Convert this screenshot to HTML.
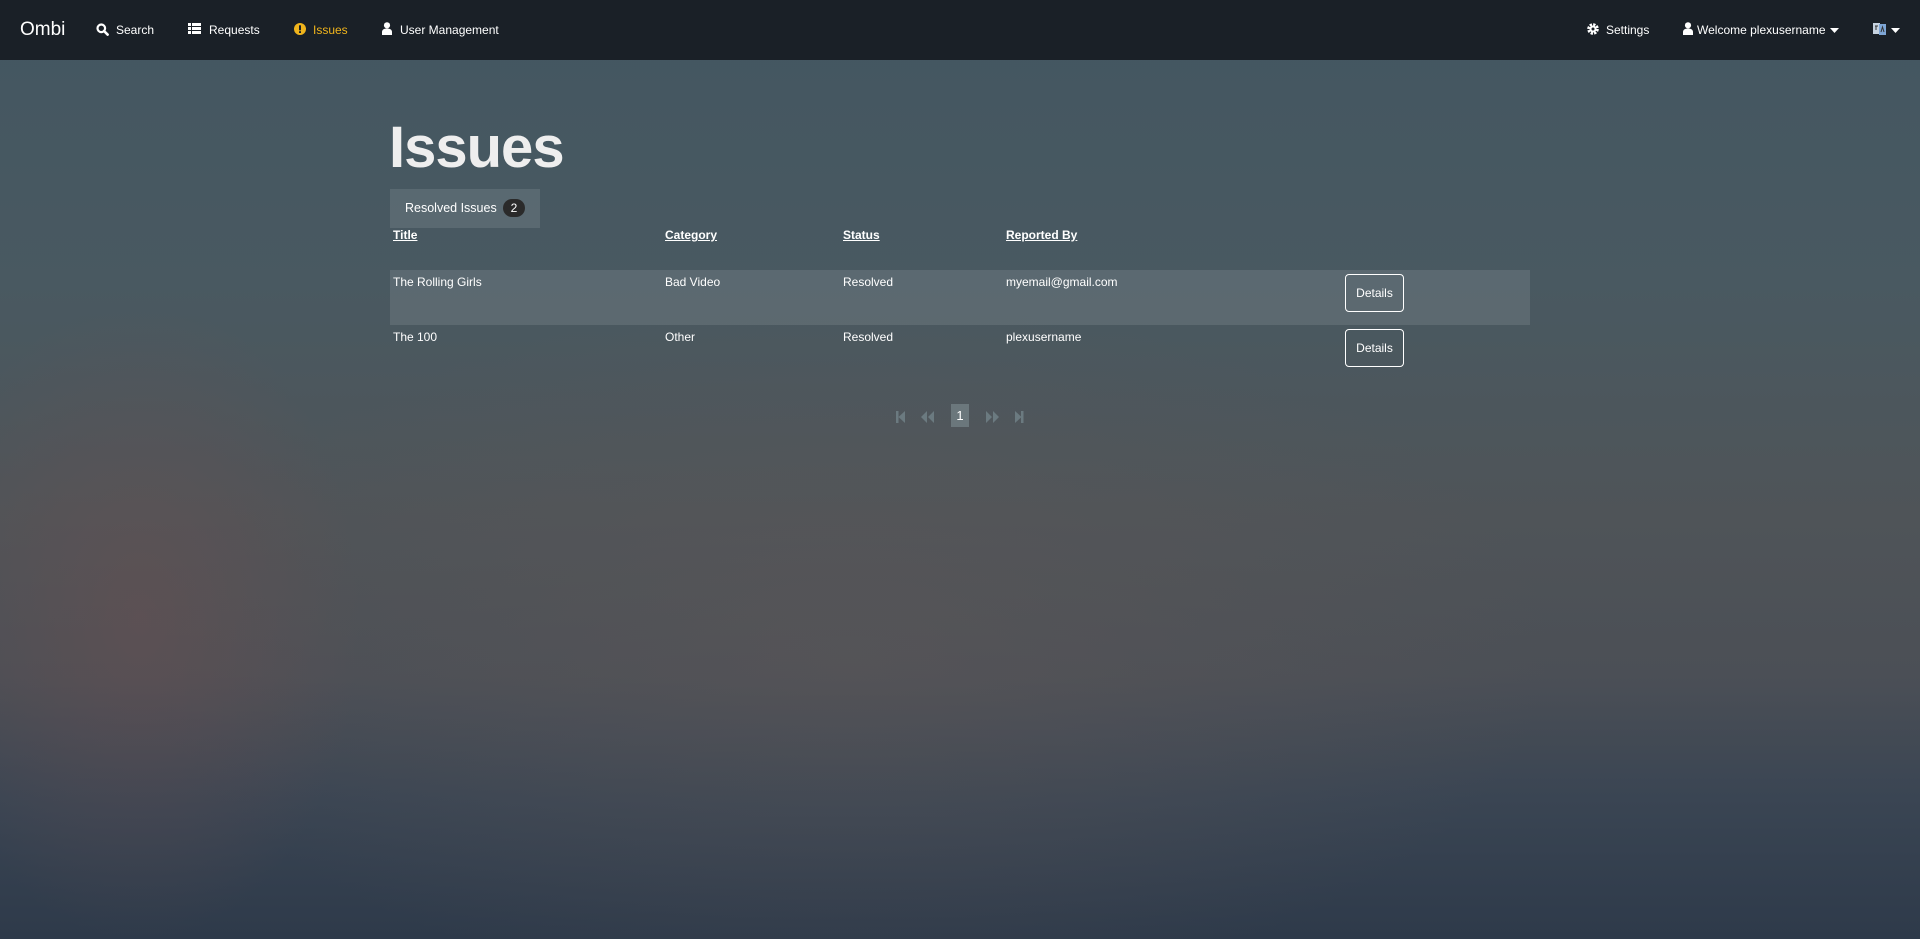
<!DOCTYPE html>
<html><head><meta charset="utf-8"><style>
*{box-sizing:border-box;margin:0;padding:0}
html,body{width:1920px;height:939px;overflow:hidden}
body{font-family:"Liberation Sans",Arial,sans-serif;color:#fff;position:relative;
background:
radial-gradient(ellipse 220px 320px at 140px 620px,rgba(110,80,80,.45),rgba(110,80,80,0) 100%),
radial-gradient(ellipse 700px 350px at 850px 650px,rgba(95,88,88,.45),rgba(95,88,88,0) 100%),
linear-gradient(to bottom,#435661 0%,#495961 30%,#4f5458 55%,#4b4f56 72%,#3a4553 85%,#2e3a4a 100%);}
.nav{position:absolute;left:0;top:0;width:1920px;height:60px;background:#1a2027;font-size:12px}
.nav span,.nav svg{position:absolute}
.nav span{top:22px;line-height:16px;white-space:nowrap}
.h{position:absolute;left:389px;top:114px;font-size:58px;font-weight:bold;color:#eee;letter-spacing:-1px}
.tab{position:absolute;left:390px;top:189px;width:150px;height:39px;background:rgba(255,255,255,.1);font-size:12.5px;white-space:nowrap}
.tab span{position:absolute;left:15px;top:12px}
.badge{position:absolute;top:11px;width:0}
.badge i{position:absolute;left:-11px;top:-1px;width:22px;height:18px;border-radius:9px;background:#2a2a2a;font-style:normal;text-align:center;line-height:18px;font-size:12px}
.t{position:absolute;font-size:12px;line-height:14px;white-space:nowrap}
.th{font-weight:bold;text-decoration:underline}
.row{position:absolute;left:390px;top:270px;width:1140px;height:55px;background:rgba(255,255,255,.1)}
.btn{position:absolute;left:1345px;width:59px;height:38px;border:1px solid #fff;border-radius:4px;font-size:12px;text-align:center;line-height:36px}
.pg{position:absolute;left:951px;top:404px;width:18px;height:23px;background:#6b777c;font-size:13px;text-align:center;line-height:23px}
</style></head><body>
<div class="nav">
<span style="left:20px;top:19px;font-size:19px;line-height:22px">Ombi</span>
<svg style="left:96px;top:23px" width="13" height="13" viewBox="0 0 13 13"><circle cx="5.3" cy="5.3" r="3.8" fill="none" stroke="#fff" stroke-width="2.2"/><path d="M8 8l3.6 3.6" stroke="#fff" stroke-width="2.6" stroke-linecap="round"/></svg>
<span style="left:116px">Search</span>
<svg style="left:188px;top:23px" width="13" height="11" viewBox="0 0 13 11"><path fill="#fff" d="M0 0h3v3H0zM4 0h9v3H4zM0 4h3v3H0zM4 4h9v3H4zM0 8h3v3H0zM4 8h9v3H4z"/></svg>
<span style="left:209px">Requests</span>
<svg style="left:294px;top:23px" width="12" height="12" viewBox="0 0 12 12"><circle cx="6" cy="6" r="6" fill="#f0b41c"/><rect x="5" y="2.3" width="2" height="5" fill="#1a2027"/><rect x="5" y="8.2" width="2" height="1.8" fill="#1a2027"/></svg>
<span style="left:313px;color:#f0b41c">Issues</span>
<svg style="left:382px;top:22px" width="10" height="13" viewBox="0 0 10 13"><circle cx="5" cy="3.3" r="3.1" fill="#fff"/><path d="M0 13v-3c0-2.3 2-3.5 5-3.5s5 1.2 5 3.5v3z" fill="#fff"/></svg>
<span style="left:400px">User Management</span>
<svg style="left:1587px;top:23px" width="12" height="12" viewBox="0 0 12 12"><circle cx="6" cy="6" r="4.2" fill="none" stroke="#fff" stroke-width="3.2" stroke-dasharray="2.2 1.1"/><circle cx="6" cy="6" r="3.5" fill="#fff"/><circle cx="6" cy="6" r="1.5" fill="#1a2027"/></svg>
<span style="left:1606px">Settings</span>
<svg style="left:1683px;top:22px" width="10" height="13" viewBox="0 0 10 13"><circle cx="5" cy="3.3" r="3.1" fill="#fff"/><path d="M0 13v-3c0-2.3 2-3.5 5-3.5s5 1.2 5 3.5v3z" fill="#fff"/></svg>
<span style="left:1697px">Welcome plexusername</span>
<svg style="left:1830px;top:28px" width="9" height="5"><path d="M0 0h9L4.5 5z" fill="#fff"/></svg>
<svg style="left:1873px;top:22px" width="13" height="14" viewBox="0 0 13 14"><rect x="0" y="1" width="7" height="11" fill="#c7d3e0"/><rect x="6" y="2" width="7" height="11" fill="#7ea6d6"/><path d="M2 4h3M3 4v4M8 10l1.5-5 1.5 5" stroke="#333" stroke-width="1" fill="none"/></svg>
<svg style="left:1891px;top:28px" width="9" height="5"><path d="M0 0h9L4.5 5z" fill="#fff"/></svg>
</div>
<div class="h">Issues</div>
<div class="tab"><span>Resolved Issues</span><div class="badge" style="left:124px"><i>2</i></div></div>
<div class="t th" style="left:393px;top:228px">Title</div>
<div class="t th" style="left:665px;top:228px">Category</div>
<div class="t th" style="left:843px;top:228px">Status</div>
<div class="t th" style="left:1006px;top:228px">Reported By</div>
<div class="row"></div>
<div class="t" style="left:393px;top:275px">The Rolling Girls</div>
<div class="t" style="left:665px;top:275px">Bad Video</div>
<div class="t" style="left:843px;top:275px">Resolved</div>
<div class="t" style="left:1006px;top:275px">myemail@gmail.com</div>
<div class="btn" style="top:274px">Details</div>
<div class="t" style="left:393px;top:330px">The 100</div>
<div class="t" style="left:665px;top:330px">Other</div>
<div class="t" style="left:843px;top:330px">Resolved</div>
<div class="t" style="left:1006px;top:330px">plexusername</div>
<div class="btn" style="top:329px">Details</div>
<svg style="position:absolute;left:896px;top:411px" width="130" height="12" viewBox="0 0 130 12"><g fill="#6b7a80"><rect x="0" y="0" width="2.5" height="12"/><path d="M9 0v12L2.5 6z"/><path d="M31 0v12L25 6z M38 0v12L32 6z"/><path d="M90 0v12l6-6z M97 0v12l6-6z"/><path d="M119 0v12l6.5-6z"/><rect x="125" y="0" width="2.5" height="12"/></g></svg>
<div class="pg">1</div>
</body></html>
